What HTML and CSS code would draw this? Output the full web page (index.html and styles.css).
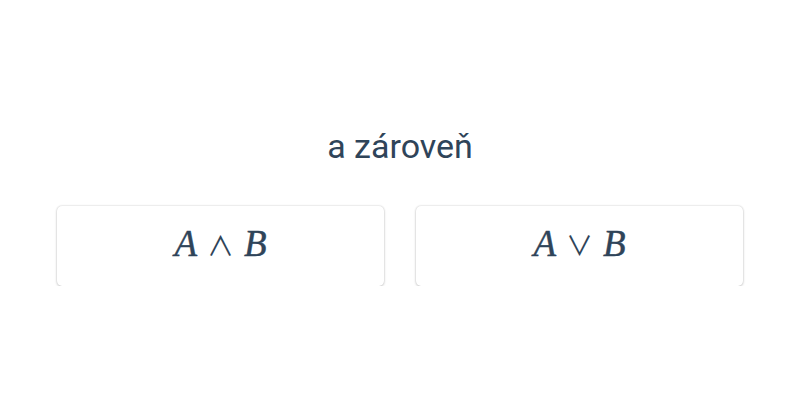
FILE: index.html
```html
<!DOCTYPE html>
<html lang="cs">
<head>
  <meta charset="UTF-8">
  <title>a zároveň</title>
  <link rel="stylesheet" href="styles.css">
</head>
<body>
  <div class="quiz">
    <h2 class="question">a zároveň</h2>
    <div class="options">
      <button class="option"><span class="math"><i>A</i><span class="op">∧</span><i>B</i></span></button>
      <button class="option"><span class="math"><i>A</i><span class="op">∨</span><i>B</i></span></button>
    </div>
  </div>
</body>
</html>
```

FILE: styles.css
```css
body {
  margin: 0;
  background-color: #ffffff;
  font-family: Roboto, "Liberation Sans", sans-serif;
  color: #2c3e50;
}
.quiz {
  padding: 123px 57px 0;
}
.question {
  margin: 0;
  text-align: center;
  font-size: 34px;
  font-weight: 400;
  line-height: 46px;
  color: #2f4459;
}
.options {
  display: grid;
  grid-template-columns: 1fr 1fr;
  gap: 32px;
  margin-top: 37px;
}
.option {
  height: 80px;
  padding: 0 0 6px;
  background: #fff;
  border: none;
  border-radius: 5px;
  box-shadow: 0 0 2px rgba(0, 0, 0, 0.2), 0 1px 3px rgba(0, 0, 0, 0.16);
  color: #2f4459;
  cursor: pointer;
}
.math {
  font-family: "Liberation Serif", serif;
  font-size: 37px;
  -webkit-text-stroke: 0.4px #2f4459;
}
.math i {
  font-style: italic;
}
.op {
  font-family: "Noto Sans CJK JP", sans-serif;
  font-size: 27px;
  margin: 0 10px;
  -webkit-text-stroke: 0;
}
```
